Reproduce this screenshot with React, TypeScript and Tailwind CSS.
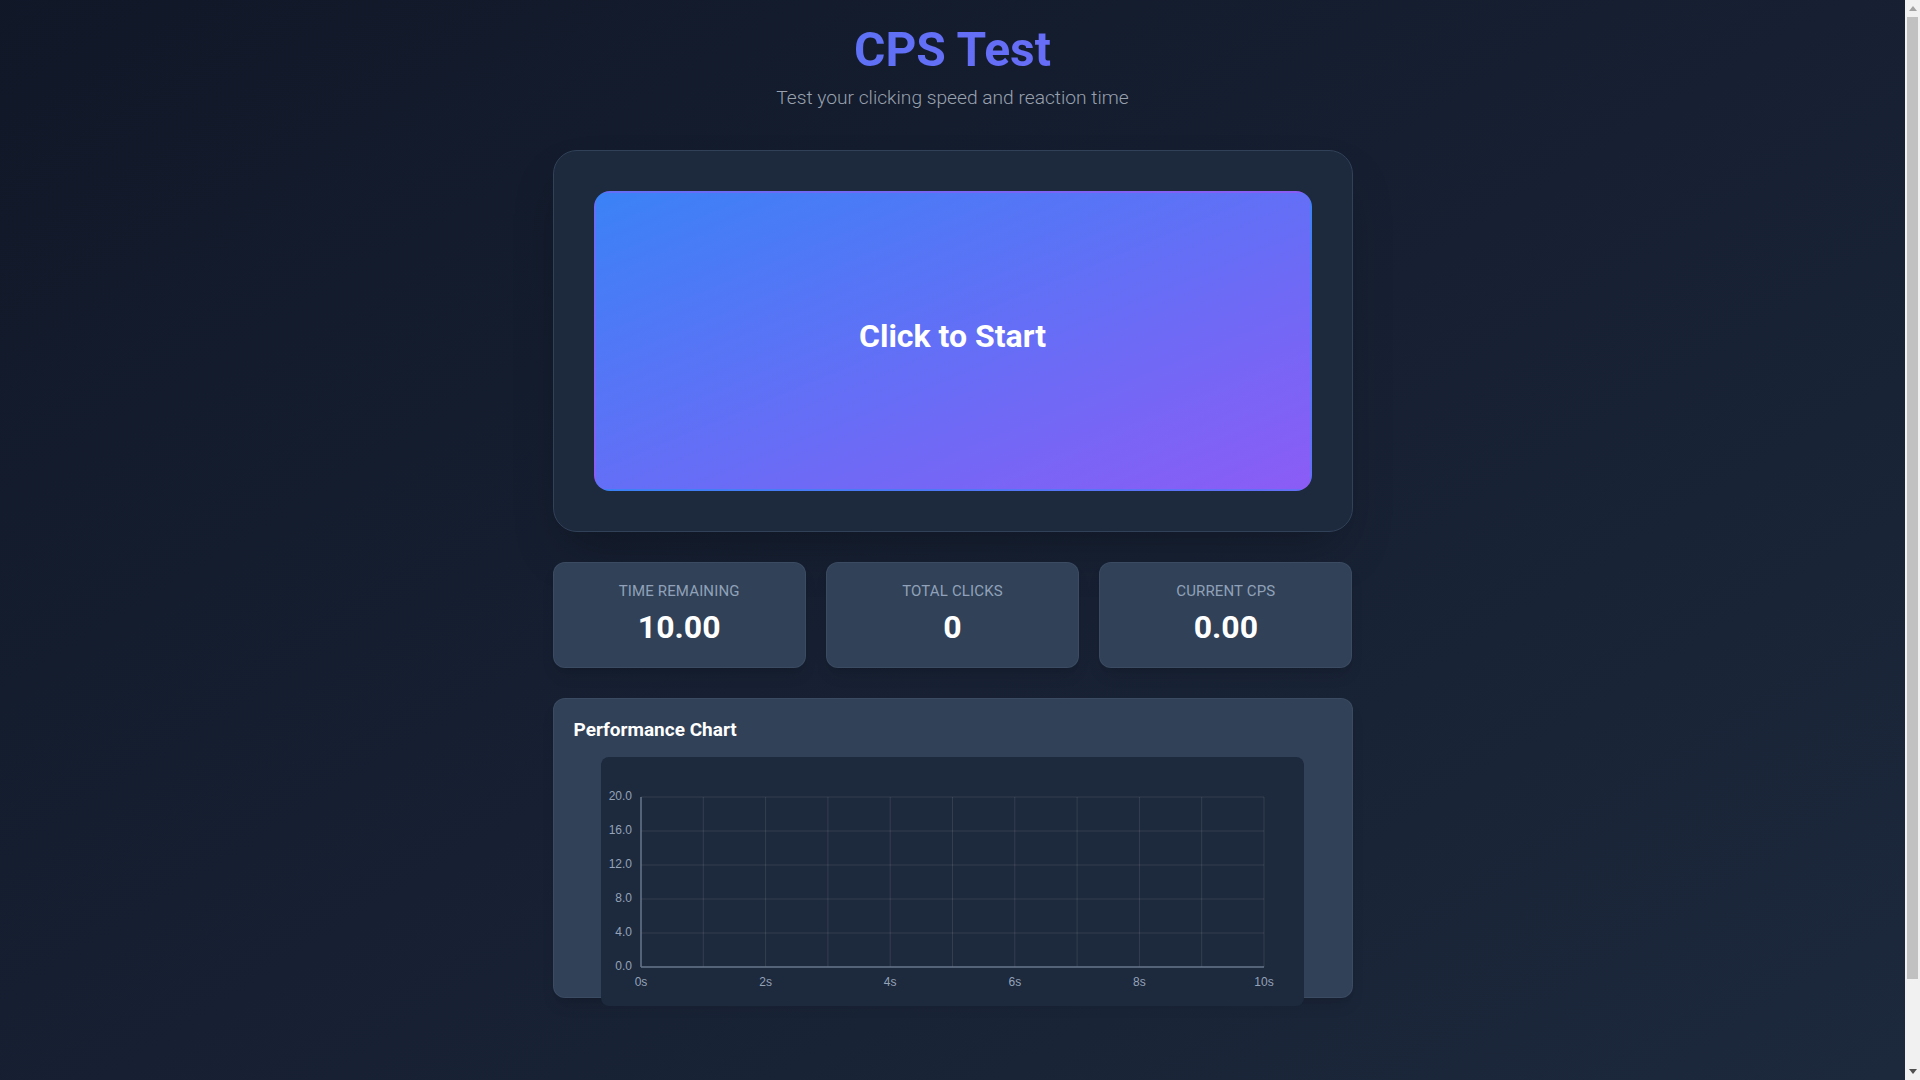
import React from "react";

function Chart() {
  const left = 40;
  const right = 663;
  const top = 40;
  const bottom = 210;
  const w = right - left;
  const h = bottom - top;
  const yTicks = [20, 16, 12, 8, 4, 0];
  const xs = Array.from({ length: 11 }, (_, i) => left + (w * i) / 10);
  const ys = yTicks.map((_, i) => top + (h * i) / 5);
  return (
    <svg width="703" height="249" viewBox="0 0 703 249" className="block">
      {ys.map((y, i) => (
        <line key={"h" + i} x1={left} x2={right} y1={y} y2={y} stroke="rgba(255,255,255,0.1)" strokeWidth="1" />
      ))}
      {xs.map((x, i) => (
        <line key={"v" + i} x1={x} x2={x} y1={top} y2={bottom} stroke="rgba(255,255,255,0.1)" strokeWidth="1" />
      ))}
      <line x1={left} x2={left} y1={top} y2={bottom} stroke="#64748b" strokeWidth="1.5" />
      <line x1={left} x2={right} y1={bottom} y2={bottom} stroke="#64748b" strokeWidth="1.5" />
      {yTicks.map((v, i) => (
        <text
          key={"yl" + i}
          x={31}
          y={ys[i]}
          textAnchor="end"
          dominantBaseline="middle"
          fontFamily="'Liberation Sans', Arial, sans-serif"
          fontSize="12"
          fill="#94a3b8"
        >
          {v.toFixed(1)}
        </text>
      ))}
      {[0, 2, 4, 6, 8, 10].map((s) => (
        <text
          key={"xl" + s}
          x={left + (w * s) / 10}
          y={226}
          textAnchor="middle"
          dominantBaseline="middle"
          fontFamily="'Liberation Sans', Arial, sans-serif"
          fontSize="12"
          fill="#94a3b8"
        >
          {s}s
        </text>
      ))}
    </svg>
  );
}

function Stat({ label, value }: { label: string; value: string }) {
  return (
    <div className="bg-slate-700 border border-slate-600/50 rounded-xl pt-[18px] pb-5 text-center shadow-lg">
      <div className="text-[15px] leading-5 uppercase tracking-[0.01em] text-slate-400">{label}</div>
      <div className="mt-[6px] text-[32px] leading-10 font-bold text-white">{value}</div>
    </div>
  );
}

function Scrollbar() {
  return (
    <div className="w-[15px] h-screen shrink-0 bg-[#f1f1f1] flex flex-col">
      <div className="h-[17px] flex items-center justify-center">
        <svg width="8" height="5" viewBox="0 0 8 5">
          <path d="M0 5 L4 0 L8 5 Z" fill="#a3a3a3" />
        </svg>
      </div>
      <div className="mx-[2px] h-[962px] bg-[#c1c1c1]" />
      <div className="flex-1" />
      <div className="h-[17px] flex items-center justify-center">
        <svg width="8" height="5" viewBox="0 0 8 5">
          <path d="M0 0 L8 0 L4 5 Z" fill="#505050" />
        </svg>
      </div>
    </div>
  );
}

export default function App() {
  return (
    <div className="h-screen flex overflow-hidden bg-gray-900">
      <div className="flex-1 h-screen overflow-hidden">
        <div
          className="min-h-full bg-gradient-to-br from-gray-900 to-slate-800 px-6 pt-[26px] pb-[179px]"
          style={{ fontFamily: "Roboto, 'Noto Sans', sans-serif" }}
        >
          <header className="text-center mb-[38px]">
            <h1 className="text-5xl leading-none font-bold bg-[linear-gradient(to_right,#3b82f6,#8b5cf6)] bg-clip-text text-transparent">
              CPS Test
            </h1>
            <p className="mt-[10px] text-[1.2rem] leading-7 font-light text-gray-400">
              Test your clicking speed and reaction time
            </p>
          </header>

          <div className="max-w-[800px] mx-auto">
            <div className="bg-slate-800 border border-slate-700 rounded-3xl p-10 shadow-2xl mb-[30px]">
              <button className="w-full h-[300px] rounded-2xl border-2 border-transparent bg-[linear-gradient(to_bottom_right,#3b82f6,#8b5cf6)] flex items-center justify-center pb-[10px] cursor-pointer">
                <span className="text-[32px] font-bold text-white">Click to Start</span>
              </button>
            </div>

            <div className="grid grid-cols-3 gap-5 mb-[30px]">
              <Stat label="Time Remaining" value="10.00" />
              <Stat label="Total Clicks" value="0" />
              <Stat label="Current CPS" value="0.00" />
            </div>

            <div className="h-[300px] bg-slate-700 border border-slate-600/50 rounded-xl px-5 pt-[17px] shadow-lg">
              <h2 className="text-[19px] leading-7 font-bold text-white mb-[13px]">Performance Chart</h2>
              <div className="w-[703px] h-[249px] mx-auto bg-slate-800 rounded-lg">
                <Chart />
              </div>
            </div>
          </div>
        </div>
      </div>
      <Scrollbar />
    </div>
  );
}
